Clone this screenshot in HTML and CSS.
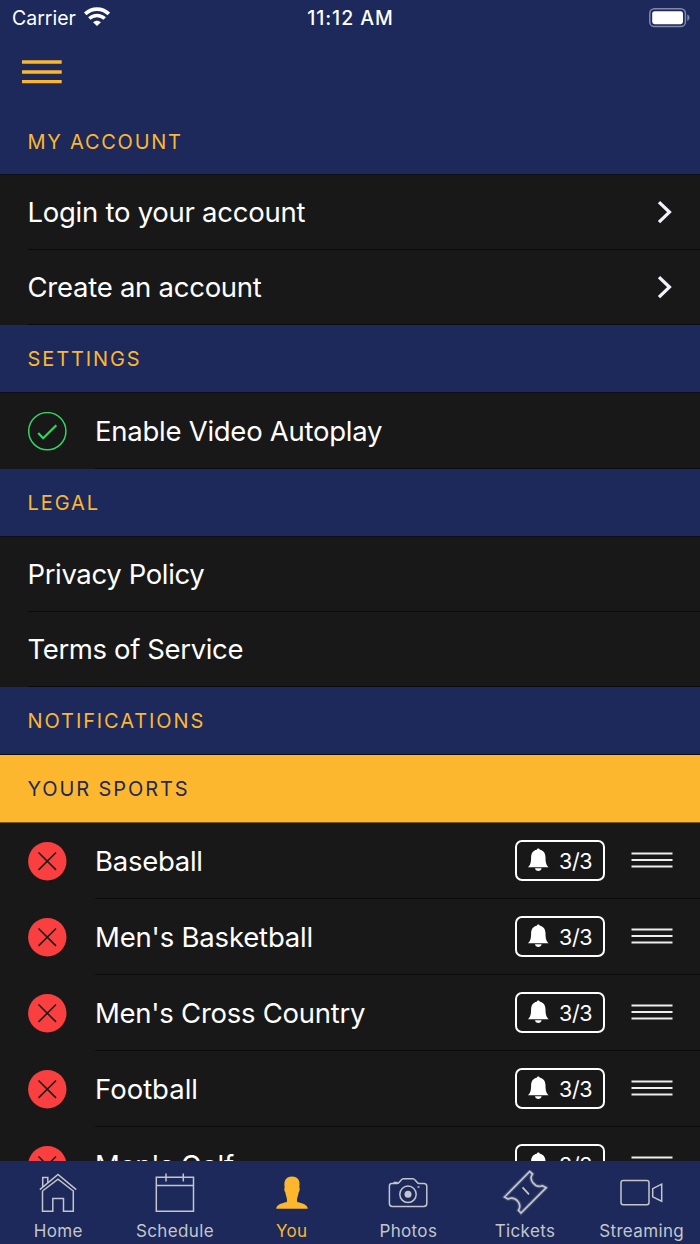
FILE: index.html
```html
<!DOCTYPE html>
<html lang="en">
<head>
<meta charset="utf-8">
<title>You</title>
<link rel="stylesheet" href="styles.css">
</head>
<body>
<svg class="defs" width="0" height="0">
  <symbol id="chevron" viewBox="0 0 16 24"><path d="M2 2 12.4 12 2 22" transform="translate(0 .1)" fill="none" stroke="#f3f1fa" stroke-width="3.3"/></symbol>
  <symbol id="remove" viewBox="0 0 39 39"><circle cx="19.3" cy="19.200" r="19.2" fill="#f93f3f"/><path d="M10.5 10.5 28 27.900M28 10.5 10.5 27.900" stroke="#181818" stroke-width="1.5"/></symbol>
  <symbol id="bell" viewBox="0 0 21 24"><path d="M8.8 1.8C9 .1 11.6.1 11.800 1.800 15.700 2.500 17.500 5.500 17.500 9.500c0 5.800 1.200 7.900 3.100 9.800H0c1.900-1.900 3.100-4 3.100-9.800 0-4 1.800-7 5.700-7.700zM7 20.300h6.600c-.4 3.500-6.200 3.500-6.600 0z" fill="#fff"/></symbol>
  <symbol id="grip" viewBox="0 0 42 16"><path d="M.5 1.500h41M.5 8h41M.5 14.500h41" stroke="#eee" stroke-width="1.8"/></symbol>
</svg>

<div class="status">
  <div class="carrier"><span>Carrier</span>
    <svg width="26" height="20" viewBox="0 0 26 20" fill="none" stroke="#fff"><path d="M1.200 6.900C8 .5 18 .5 24.800 6.900" stroke-width="3.700"/><path d="M5.300 11.500c4.500-4.100 10.900-4.100 15.400 0" stroke-width="3.500"/><path d="M13 19.100 9 15.200c2.300-2.100 5.700-2.100 8 0z" fill="#fff" stroke="none"/></svg>
  </div>
  <div class="time">11:12 AM</div>
  <div class="battery">
    <svg width="42" height="20" viewBox="0 0 42 20"><rect x=".8" y=".8" width="35.600" height="17.800" rx="4.600" fill="none" stroke="#8289a8" stroke-width="1.500"/><rect x="3.200" y="3.200" width="30.800" height="13" rx="2.400" fill="#fff"/><path d="M38.300 6.500c2.900 1.200 2.900 5.200 0 6.400z" fill="#8289a8"/></svg>
  </div>
</div>
<div class="nav"><svg width="40" height="24" viewBox="0 0 40 24"><path d="M0 2h39.700M0 12h39.700M0 21.700h39.700" stroke="#fcb72f" stroke-width="3.300"/></svg></div>

<main class="list">
  <h2 class="section account">MY ACCOUNT</h2>
  <div class="row link"><span class="label">Login to your account</span><svg class="chevron"><use href="#chevron"/></svg></div>
  <div class="row link"><span class="label">Create an account</span><svg class="chevron"><use href="#chevron"/></svg></div>
  <h2 class="section">SETTINGS</h2>
  <div class="row item"><svg class="mark" viewBox="0 0 39 39" fill="none" stroke="#30d860"><circle cx="19.300" cy="19.200" r="18.600" stroke-width="1.500"/><path d="m10.200 20.900 5 5.300L28.300 13.200" stroke-width="2.200"/></svg><span class="label">Enable Video Autoplay</span></div>
  <h2 class="section">LEGAL</h2>
  <div class="row link"><span class="label tight">Privacy Policy</span></div>
  <div class="row link"><span class="label tight">Terms of Service</span></div>
  <h2 class="section">NOTIFICATIONS</h2>
  <h2 class="section gold">YOUR SPORTS</h2>
  <div class="row item"><svg class="mark"><use href="#remove"/></svg><span class="label">Baseball</span><span class="alerts"><svg class="bell"><use href="#bell"/></svg>3/3</span><svg class="grip"><use href="#grip"/></svg></div>
  <div class="row item"><svg class="mark"><use href="#remove"/></svg><span class="label loose">Men's Basketball</span><span class="alerts"><svg class="bell"><use href="#bell"/></svg>3/3</span><svg class="grip"><use href="#grip"/></svg></div>
  <div class="row item"><svg class="mark"><use href="#remove"/></svg><span class="label">Men's Cross Country</span><span class="alerts"><svg class="bell"><use href="#bell"/></svg>3/3</span><svg class="grip"><use href="#grip"/></svg></div>
  <div class="row item"><svg class="mark"><use href="#remove"/></svg><span class="label looser">Football</span><span class="alerts"><svg class="bell"><use href="#bell"/></svg>3/3</span><svg class="grip"><use href="#grip"/></svg></div>
  <div class="row item"><svg class="mark"><use href="#remove"/></svg><span class="label">Men's Golf</span><span class="alerts"><svg class="bell"><use href="#bell"/></svg>3/3</span><svg class="grip"><use href="#grip"/></svg></div>
</main>

<nav class="tabs">
  <div class="tab"><svg viewBox="0 0 46 46"><path d="m4.800 19.700 18.200-15.200 18.200 15.200M7.500 21v20.300h10.300V28.500h10.700v12.800h9.800V21L23 9.200 7.500 21M7.700 16.500V7.500h5.100v4.800"/></svg><span>Home</span></div>
  <div class="tab"><svg viewBox="0 0 46 46"><path d="M4.300 7.300h37.200v33.900H4.300zM4.300 15.500h37.200M14 3.500v8M31.300 3.500v8"/></svg><span>Schedule</span></div>
  <div class="tab active"><svg viewBox="0 0 46 46"><path d="M7.200 38.700c.3-3.500 4-5.300 10.700-6.700.7-3.400-1.100-6-1.600-9.800-1.100-.6-1.300-4-.6-4.900C14.500 11 17 6.600 23 6.600s8.500 4.400 7.300 10.700c.7.900.5 4.300-.6 4.900-.5 3.800-2.300 6.400-1.600 9.800 6.700 1.400 10.400 3.200 10.700 6.700z" fill="#fcb72f" stroke="none"/></svg><span>You</span></div>
  <div class="tab"><svg viewBox="0 0 46 46"><path d="M6.500 13.500h5.800c2 0 3.700-4.700 5.800-4.700h10c2.200 0 3.800 4.700 5.800 4.700h5c2 0 2.900.9 2.900 2.800v17.200c0 2-.9 2.900-2.900 2.900H7.300c-2 0-2.900-.9-2.900-2.900V16.300c0-1.900.9-2.800 2.100-2.800zM8.500 12.500h4"/><circle cx="23" cy="24.300" r="8.200"/><circle cx="23" cy="24.300" r="3.500" fill="#c4c6cc" stroke="none"/><path d="M32.500 17h2"/></svg><span>Photos</span></div>
  <div class="tab"><svg viewBox="0 0 46 46"><path d="M2.500 27 27.700 1.500l2.800 2.500c-1.500 2.200-2 5.500.2 8.500 3 3.800 6.500 4.500 9.500 3.200l4 2L19 43l-2.500-2.700c1.500-2.300 1.500-6-.5-8.800-2.800-3.400-6.500-4-10-2.500z" stroke-width="4" opacity=".2"/><path d="M2.500 27 27.700 1.500l2.800 2.500c-1.500 2.200-2 5.500.2 8.500 3 3.800 6.500 4.500 9.500 3.200l4 2L19 43l-2.500-2.700c1.500-2.300 1.500-6-.5-8.800-2.800-3.400-6.500-4-10-2.500zM20.500 17.300l6.500 7" stroke-width="1.700"/></svg><span>Tickets</span></div>
  <div class="tab"><svg viewBox="0 0 46 46"><rect x="2" y="10.500" width="28" height="24.200" rx="2.200"/><path d="m42.700 14.200-9 4.400v8.300l9 4.300z"/></svg><span>Streaming</span></div>
</nav>
</body>
</html>
```
FILE: styles.css
```css
* { box-sizing: border-box; }
body {
  margin: 0;
  width: 700px;
  height: 1244px;
  display: flex;
  flex-direction: column;
  overflow: hidden;
  background: #1c295a;
  color: #fff;
  font-family: Inter, "Liberation Sans", sans-serif;
}
svg { display: block; flex: none; }
.defs { position: absolute; }
.status {
  height: 36px;
  flex: none;
  display: grid;
  grid-template-columns: 1fr auto 1fr;
  align-items: center;
  padding: 0 9px 0 12px;
  font-size: 19.500px;
}
.carrier { display: flex; align-items: center; gap: 8px; }
.carrier svg { margin-top: -2px; }
.time { font-weight: 500; font-size: 19.500px; letter-spacing: .95px; margin-left: -2px; }
.battery { justify-self: end; margin-top: -1px; }
.nav { height: 71px; flex: none; padding: 24px 22px; }
.list { flex: 1; min-height: 0; overflow: hidden; background: #181818; }
.section {
  margin: 0;
  height: 68px;
  padding: 0 27.500px;
  display: flex;
  align-items: center;
  background: #1c295a;
  border-bottom: 1px solid #0c0e18;
  color: #fcb72f;
  font-size: 20px;
  font-weight: 400;
  letter-spacing: 1.900px;
}
.account { padding-top: 2px; letter-spacing: 1.750px; }
.gold { background: #fcb72f; color: #1c295a; border-bottom-color: #765719; }
.row { display: flex; align-items: center; margin-left: 28px; padding-right: 27px; border-bottom: 1px solid #0b0b0b; }
.link { height: 75px; }
.item { height: 76px; margin-left: 95px; }
.label { flex: 1; font-size: 27.500px; letter-spacing: -.26px; white-space: nowrap; }
.link .label { margin-left: -.5px; }
.tight { letter-spacing: -.37px; }
.loose { letter-spacing: -.18px; }
.looser { letter-spacing: 0; }
.mark { width: 39px; height: 39px; margin: 1px 28.500px 0 -67.500px; }
.chevron { width: 16px; height: 24px; margin-right: .5px; }
.alerts {
  width: 90px;
  height: 41px;
  margin-right: 26px;
  display: flex;
  align-items: center;
  gap: 10px;
  padding-left: 11px;
  border: 2px solid #fff;
  border-radius: 7px;
  font-size: 21.500px;
  letter-spacing: -.4px;
}
.bell { width: 21px; height: 24px; margin-top: -1px; }
.grip { width: 42px; height: 16px; margin-top: -2px; }
.tabs { height: 83px; flex: none; display: grid; grid-template-columns: repeat(6, 1fr); }
.tab {
  display: flex;
  flex-direction: column;
  align-items: center;
  padding-top: 9px;
  color: #c4c6cc;
  font-size: 17px;
  letter-spacing: .35px;
}
.tab svg { width: 46px; height: 46px; fill: none; stroke: #c4c6cc; stroke-width: 1.500; }
.tab span { margin-top: 5px; line-height: 21px; }
.active { color: #fcb72f; }
```
